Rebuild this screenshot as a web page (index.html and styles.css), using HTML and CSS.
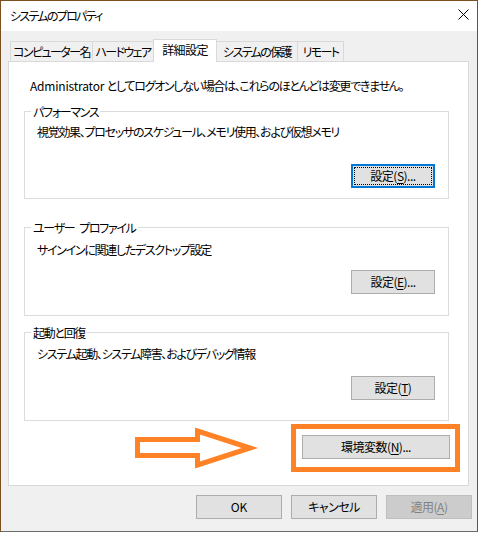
FILE: index.html
```html
<!DOCTYPE html>
<html lang="ja">
<head>
<meta charset="utf-8">
<link rel="stylesheet" href="styles.css">
</head>
<body>
<div class="window">
  <div class="titlebar">
    <span class="title">システムのプロパティ</span>
    <svg class="close" width="11" height="11" viewBox="0 0 11 11"><path d="M0.5 0.5L10.5 10.5M10.5 0.5L0.5 10.5" stroke="#000" stroke-width="1" fill="none"/></svg>
  </div>
  <div class="body">
    <div class="tabs">
      <div class="tab t1">コンピューター名</div>
      <div class="tab t2">ハードウェア</div>
      <div class="tab t3 selected">詳細設定</div>
      <div class="tab t4">システムの保護</div>
      <div class="tab t5">リモート</div>
    </div>
    <div class="panel">
      <p class="intro"><span class="latin">Administrator </span>としてログオンしない場合は、これらのほとんどは変更できません。</p>
      <div class="group g1">
        <div class="group-label">パフォーマンス</div>
        <p class="desc">視覚効果、プロセッサのスケジュール、メモリ使用、および仮想メモリ</p>
        <div class="actions"><button class="btn focused">設定(<u>S</u>)...</button></div>
      </div>
      <div class="group g2">
        <div class="group-label">ユーザー&ensp;プロファイル</div>
        <p class="desc">サインインに関連したデスクトップ設定</p>
        <div class="actions"><button class="btn">設定(<u>E</u>)...</button></div>
      </div>
      <div class="group g3">
        <div class="group-label">起動と回復</div>
        <p class="desc">システム起動、システム障害、およびデバッグ情報</p>
        <div class="actions"><button class="btn">設定(<u>T</u>)</button></div>
      </div>
      <div class="env-row">
        <div class="env-wrap">
          <svg class="arrow" width="130" height="46" viewBox="0 0 130 46"><polygon points="5.5,13.5 65.5,13.5 65.5,5 118,22 65.5,39 65.5,29.5 5.5,29.5" fill="none" stroke="#ff8326" stroke-width="5" stroke-linejoin="miter"/></svg>
          <button class="btn env">環境変数(<u>N</u>)...</button>
        </div>
      </div>
    </div>
    <div class="footer">
      <button class="btn foot latin">OK</button>
      <button class="btn foot">キャンセル</button>
      <button class="btn foot disabled">適用(<u>A</u>)</button>
    </div>
  </div>
</div>
</body>
</html>
```
FILE: styles.css
```css
* { box-sizing: border-box; }
html, body { margin: 0; padding: 0; background: #fff; }
body {
  font-family: "Noto Sans CJK JP", "Noto Sans", sans-serif;
  font-size: 12px;
  color: #000;
  font-feature-settings: "palt";
  letter-spacing: -1.3px;
}
.latin { letter-spacing: -0.2px; }
.window {
  width: 478px;
  height: 532px;
  border: 1px solid #7b4f20;
  border-bottom-color: #6a6a6a;
  background: #f0f0f0;
  display: flex;
  flex-direction: column;
}
.titlebar {
  height: 30px;
  background: #fff;
  display: flex;
  align-items: center;
  justify-content: space-between;
  padding: 0 9px 0 9px;
}
.title { line-height: 16px; letter-spacing: -1.7px; }
.close { margin-bottom: 3px; margin-right: -1px; }
.body { flex: 1; display: flex; flex-direction: column; }
.tabs {
  display: flex;
  align-items: flex-end;
  height: 31px;
  padding-top: 8px;
  padding-left: 9px;
  margin-bottom: -1px;
  position: relative;
  z-index: 1;
  letter-spacing: -1.6px;
}
.tab {
  flex: none;
  height: 21px;
  border: 1px solid #d9d9d9;
  background: #f0f0f0;
  display: flex;
  align-items: center;
  justify-content: center;
  margin-left: -1px;
  line-height: 16px;
  white-space: nowrap;
}
.t1 { width: 83px; margin-left: 0; }
.t2 { width: 62px; }
.t3 { width: 64px; letter-spacing: -0.6px; }
.t4 { width: 82px; }
.t5 { width: 47px; }
.tab.selected {
  height: 23px;
  background: #fff;
  border-bottom: none;
  padding-bottom: 2px;
}
.panel {
  margin-left: 7px;
  width: 461px;
  border: 1px solid #d9d9d9;
  background: #fff;
  padding: 16px 19px 26px 15px;
}
.intro { margin: 0 0 0 6px; line-height: 16px; white-space: nowrap; }
.group {
  border: 1px solid #dcdcdc;
}
.group-label {
  display: table;
  margin: -8px 0 0 6px;
  padding: 0 2px;
  background: #fff;
  line-height: 16px;
}
.desc { margin: 5px 0 0 12px; line-height: 16px; white-space: nowrap; }
.g1 { margin-top: 17px; padding-bottom: 10px; }
.g1 .desc { margin-top: 4px; }
.g1 .actions { margin-top: 24px; }
.g2 { margin-top: 28px; padding-bottom: 21px; }
.g2 .desc { margin-top: 6px; }
.g2 .actions { margin-top: 12px; }
.g3 { margin-top: 16px; padding-bottom: 20px; }
.g3 .actions { margin-top: 14px; }
.actions { display: flex; justify-content: flex-end; padding-right: 13px; }
.btn {
  font: inherit;
  letter-spacing: -0.5px;
  color: #000;
  height: 24px;
  width: 84px;
  background: #e1e1e1;
  border: 1px solid #adadad;
  padding: 0;
  margin: 0;
  line-height: 16px;
}
.btn u { text-underline-offset: 2px; }
.btn.focused {
  border: 2px solid #0078d7;
  outline: 1px dotted #000;
  outline-offset: -4px;
}
.env-row { display: flex; justify-content: flex-end; margin-top: 14px; margin-right: -1px; }
.env-wrap { position: relative; display: flex; }
.env-wrap::after {
  content: "";
  position: absolute;
  left: -11px;
  top: -11px;
  right: -10px;
  bottom: -13px;
  border: 5px solid #ff8326;
}
.btn.env { width: 148px; }
.arrow { position: absolute; left: -170px; top: -9px; }
.footer {
  display: flex;
  justify-content: flex-end;
  gap: 9px;
  margin-top: 9px;
  padding-right: 5px;
}
.btn.foot { width: 86px; flex: none; }
.btn.foot.latin { letter-spacing: 0; }
.btn.disabled { background: #cccccc; border-color: #bfbfbf; color: #838383; }
```
